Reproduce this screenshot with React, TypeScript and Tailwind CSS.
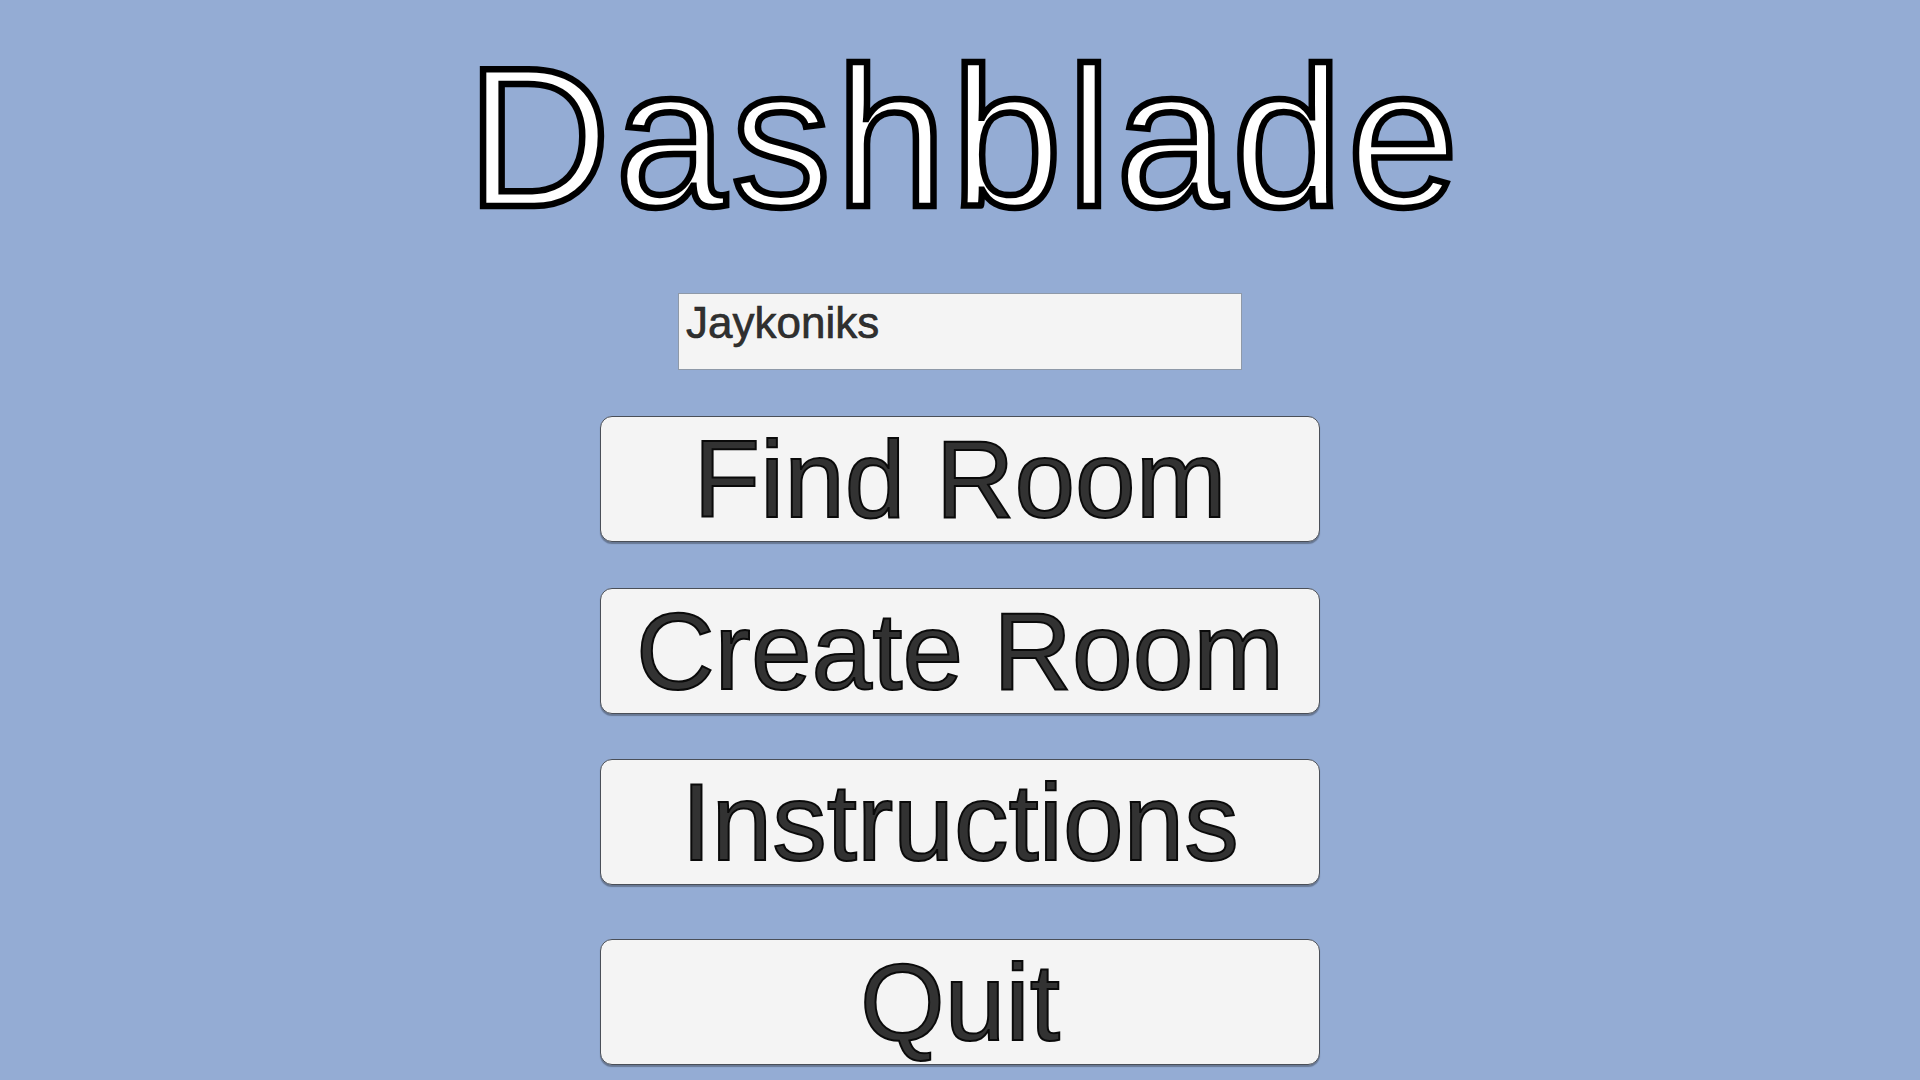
import React from "react";

const buttons = [
  { label: "Find Room", gap: "mt-[46px]" },
  { label: "Create Room", gap: "mt-[46px]" },
  { label: "Instructions", gap: "mt-[45px]" },
  { label: "Quit", gap: "mt-[54px]" },
];

export default function App() {
  return (
    <div className="w-[1920px] h-[1080px] overflow-hidden bg-[#94acd4] flex flex-col items-center font-['Liberation_Sans',Arial,sans-serif]">
      {/* Title */}
      <h1 className="pt-[38px] pl-[10px] text-[199px] leading-[199px] tracking-[5px] text-white [-webkit-text-stroke:6.5px_#000] select-none">
        Dashblade
      </h1>

      {/* Player name */}
      <div className="mt-[56px] w-[564px] h-[77px] bg-[#f4f4f4] border border-[#8e99a8] pl-[7px] pt-[4px]">
        <input
          defaultValue="Jaykoniks"
          className="w-full bg-transparent outline-none text-[44px] leading-[44px] text-[#303030] [-webkit-text-stroke:0.6px_#222] font-['Liberation_Sans',Arial,sans-serif]"
        />
      </div>

      {/* Menu */}
      {buttons.map((b) => (
        <button
          key={b.label}
          className={`${b.gap} w-[720px] h-[126px] shrink-0 flex items-center justify-center bg-[#f4f4f4] border-[1.5px] border-[#4a4f58] rounded-[12px] shadow-[0_2px_1px_rgba(0,0,0,0.3)] text-[109px] leading-[109px] text-[#323232] [-webkit-text-stroke:2px_#0a0a0a]`}
        >
          {b.label}
        </button>
      ))}
    </div>
  );
}
